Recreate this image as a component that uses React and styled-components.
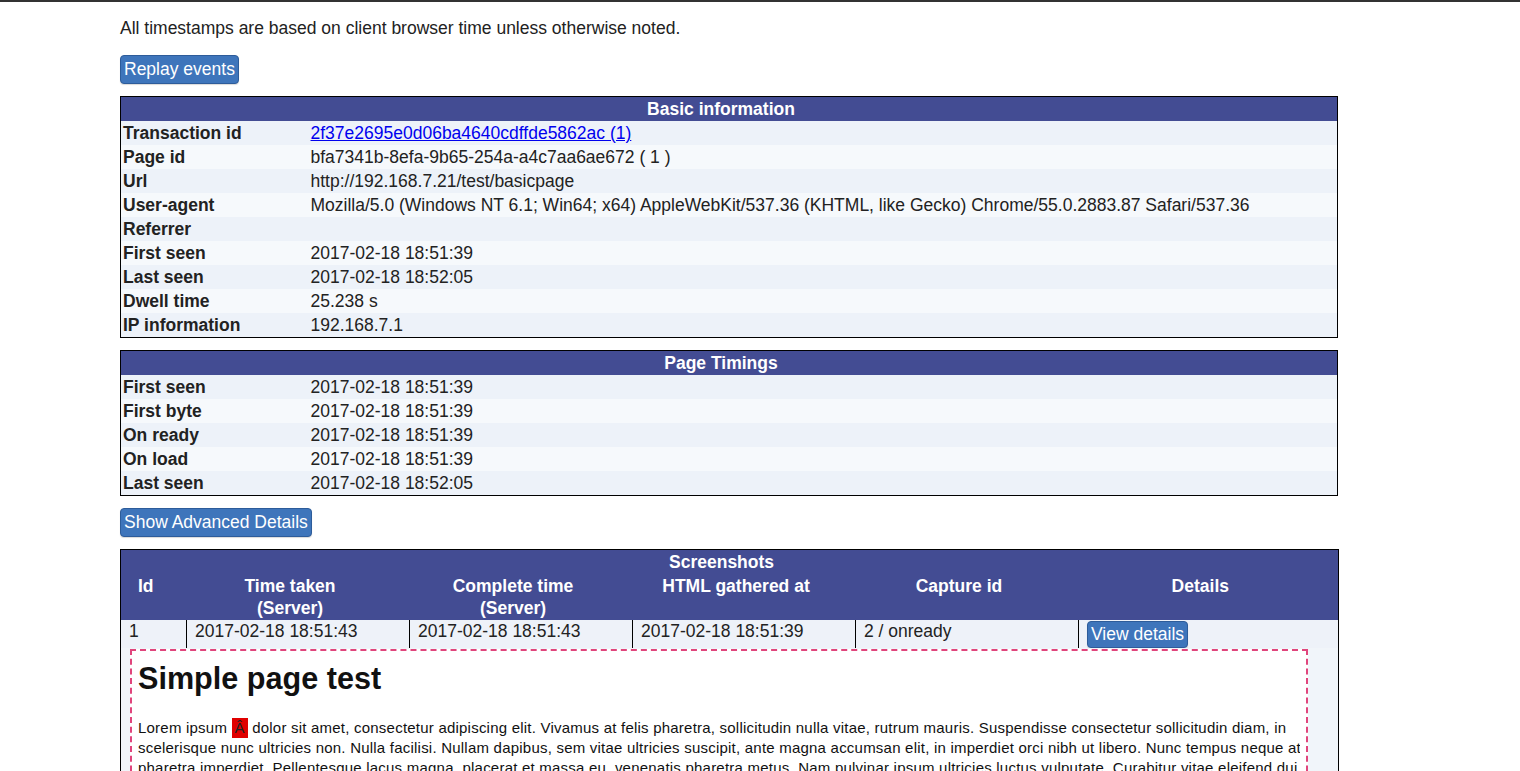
import React from "react";
import styled, { createGlobalStyle } from "styled-components";

const GlobalStyle = createGlobalStyle`
  body {
    margin: 0;
    background: #fff;
    font-family: "Liberation Sans", Arial, sans-serif;
    font-size: 17.5px;
    color: #222;
  }
`;

const basicInfo = [
  ["Transaction id", "2f37e2695e0d06ba4640cdffde5862ac (1)", true],
  ["Page id", "bfa7341b-8efa-9b65-254a-a4c7aa6ae672 ( 1 )"],
  ["Url", "http://192.168.7.21/test/basicpage"],
  [
    "User-agent",
    "Mozilla/5.0 (Windows NT 6.1; Win64; x64) AppleWebKit/537.36 (KHTML, like Gecko) Chrome/55.0.2883.87 Safari/537.36",
  ],
  ["Referrer", ""],
  ["First seen", "2017-02-18 18:51:39"],
  ["Last seen", "2017-02-18 18:52:05"],
  ["Dwell time", "25.238 s"],
  ["IP information", "192.168.7.1"],
];

const timings = [
  ["First seen", "2017-02-18 18:51:39"],
  ["First byte", "2017-02-18 18:51:39"],
  ["On ready", "2017-02-18 18:51:39"],
  ["On load", "2017-02-18 18:51:39"],
  ["Last seen", "2017-02-18 18:52:05"],
];

const shotCols = [
  ["Id", 66],
  ["Time taken\n(Server)", 223],
  ["Complete time\n(Server)", 223],
  ["HTML gathered at", 223],
  ["Capture id", 223],
  ["Details", 260],
];

const InfoTable = ({ title, rows }) => (
  <Table>
    <colgroup>
      <col style={{ width: 188 }} />
      <col />
    </colgroup>
    <thead>
      <tr>
        <HeadCell colSpan={2}>{title}</HeadCell>
      </tr>
    </thead>
    <tbody>
      {rows.map(([label, value, link], i) => (
        <Row key={label + i} $odd={i % 2 === 0}>
          <Label>{label}</Label>
          <Value>{link ? <Link href="#">{value}</Link> : value}</Value>
        </Row>
      ))}
    </tbody>
  </Table>
);

const App = () => {
  return (
    <>
      <GlobalStyle />
      <TopBar />
      <Page>
        <Note>All timestamps are based on client browser time unless otherwise noted.</Note>
        <Button>Replay events</Button>
        <InfoTable title="Basic information" rows={basicInfo} />
        <InfoTable title="Page Timings" rows={timings} />
        <Button>Show Advanced Details</Button>
        <Table>
          <colgroup>
            {shotCols.map(([name, w]) => (
              <col key={name} style={{ width: w }} />
            ))}
          </colgroup>
          <thead>
            <tr>
              <HeadCell colSpan={6}>Screenshots</HeadCell>
            </tr>
            <tr>
              {shotCols.map(([name]) => (
                <ColHead key={name}>{name}</ColHead>
              ))}
            </tr>
          </thead>
          <tbody>
            <DataRow>
              <DataCell $line>1</DataCell>
              <DataCell $line>2017-02-18 18:51:43</DataCell>
              <DataCell $line>2017-02-18 18:51:43</DataCell>
              <DataCell $line>2017-02-18 18:51:39</DataCell>
              <DataCell $line>2 / onready</DataCell>
              <DataCell>
                <SmallButton>View details</SmallButton>
              </DataCell>
            </DataRow>
            <tr>
              <PreviewCell colSpan={6}>
                <Preview>
                  <PreviewTitle>Simple page test</PreviewTitle>
                  <PreviewText>
                    Lorem ipsum <Mark>Â</Mark> dolor sit amet, consectetur adipiscing elit. Vivamus at felis
                    pharetra, sollicitudin nulla vitae, rutrum mauris. Suspendisse consectetur sollicitudin diam, in
                    <br />
                    scelerisque nunc ultricies non. Nulla facilisi. Nullam dapibus, sem vitae ultricies suscipit, ante
                    magna accumsan elit, in imperdiet orci nibh ut libero. Nunc tempus neque at
                    <br />
                    pharetra imperdiet. Pellentesque lacus magna, placerat et massa eu, venenatis pharetra metus. Nam
                    pulvinar ipsum ultricies luctus vulputate. Curabitur vitae eleifend dui,
                    <br />
                    eget tincidunt sapien. Donec vel ligula sit amet sem facilisis feugiat. Etiam in lectus nec
                    nisi lobortis consequat.
                  </PreviewText>
                </Preview>
              </PreviewCell>
            </tr>
          </tbody>
        </Table>
      </Page>
    </>
  );
};

const TopBar = styled.div`
  height: 2px;
  background: #333;
`;

const Page = styled.div`
  padding: 16px 0 40px 120px;
  width: 1218px;
`;

const Note = styled.div`
  line-height: 20px;
  margin-bottom: 17px;
`;

const Button = styled.button`
  display: block;
  font-family: "Liberation Sans", Arial, sans-serif;
  font-size: 17.5px;
  line-height: 21px;
  padding: 3px 3px;
  color: #fff;
  background: #3e75bb;
  border: 1px solid #2d5c9a;
  border-radius: 4px;
  box-shadow: 0 1px 1px rgba(0, 0, 0, 0.15);
  margin-bottom: 12px;
  cursor: pointer;
`;

const SmallButton = styled(Button)`
  padding: 2px 3px;
  margin: 1px 0 0;
`;

const Table = styled.table`
  width: 1218px;
  border-collapse: collapse;
  border: 1px solid #000;
  table-layout: fixed;
  margin-bottom: 12px;
`;

const HeadCell = styled.th`
  background: #434c93;
  color: #fff;
  font-weight: bold;
  font-size: 17.5px;
  line-height: 24px;
  padding: 0 16px 0 0;
  text-align: center;
`;

const Row = styled.tr`
  background: ${(p) => (p.$odd ? "#edf2f9" : "#f6f9fc")};
`;

const Label = styled.td`
  font-weight: bold;
  line-height: 24px;
  padding: 0 2px;
  white-space: nowrap;
`;

const Value = styled.td`
  line-height: 24px;
  padding: 0 2px;
  white-space: nowrap;
`;

const Link = styled.a`
  color: #0000ee;
  text-decoration: underline;
`;

const ColHead = styled.th`
  background: #434c93;
  color: #fff;
  font-weight: bold;
  font-size: 17.5px;
  line-height: 22px;
  padding: 1px 16px 1px 0;
  vertical-align: top;
  text-align: center;
  white-space: pre-line;
`;

const DataRow = styled.tr`
  background: #eef2f9;
`;

const DataCell = styled.td`
  line-height: 22px;
  padding: 0 8px;
  vertical-align: top;
  border-right: ${(p) => (p.$line ? "1px solid #000" : "none")};
  height: 28px;
  white-space: nowrap;
`;

const PreviewCell = styled.td`
  background: #f1f5fa;
  padding: 1px 30px 0 9px;
`;

const Preview = styled.div`
  background: #fff;
  border: 2px dashed #e0457c;
  padding: 11px 6px 20px;
  font-family: "Liberation Sans", Arial, sans-serif;
  color: #111;
`;

const PreviewTitle = styled.h1`
  font-size: 30.6px;
  line-height: 32px;
  margin: 0 0 24px;
  font-weight: bold;
`;

const PreviewText = styled.p`
  margin: 0;
  font-size: 15px;
  letter-spacing: 0.22px;
  line-height: 20px;
  white-space: nowrap;
  overflow: hidden;
`;

const Mark = styled.span`
  display: inline-block;
  background: #e00000;
  color: #222;
  padding: 0 3px;
  line-height: 20px;
`;

export default App;
